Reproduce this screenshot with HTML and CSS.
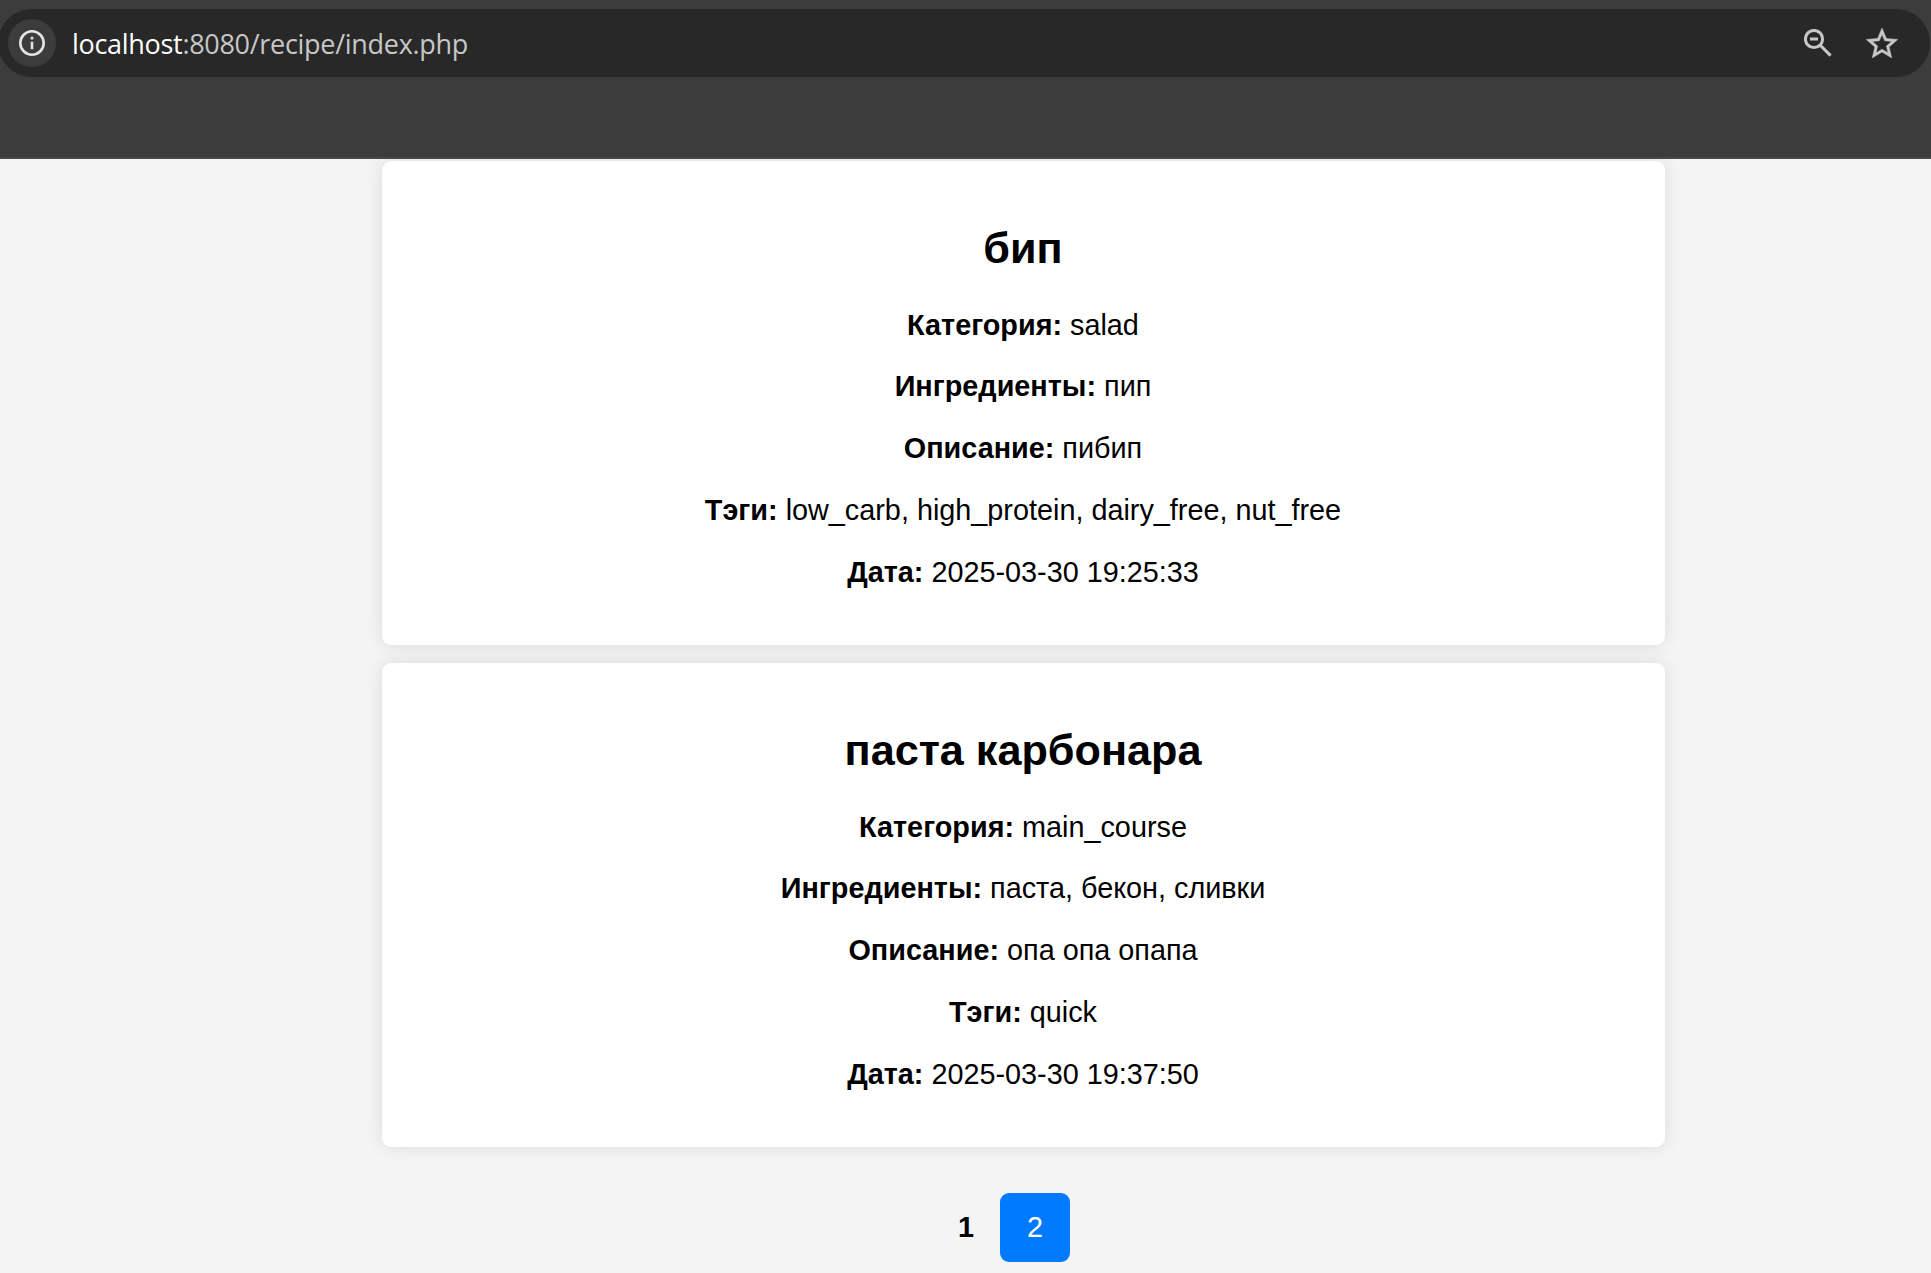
FILE: index.html
```html
<!DOCTYPE html>
<html lang="ru">
<head>
<meta charset="utf-8">
<title>Рецепты</title>
<link rel="stylesheet" href="styles.css">
</head>
<body>
<header class="toolbar">
  <div class="address-bar">
    <span class="site-info">
      <svg class="icon-info" viewBox="0 0 26 26"><circle cx="13" cy="13" r="11.7" fill="none" stroke="#e3e3e3" stroke-width="2.6"/><path d="M11.7 11.8h2.6v7.4h-2.6zM11.7 6.8h2.6v2.6h-2.6z" fill="#e3e3e3"/></svg>
    </span>
    <span class="url"><span class="host">localhost</span>:8080/recipe/index.php</span>
    <svg class="icon-zoom" viewBox="0 0 28 28"><g fill="none" stroke="#c7c7c7" stroke-width="3"><circle cx="10" cy="10" r="8.6"/><path d="M16 16l10.6 10.6M6 10h8"/></g></svg>
    <svg class="icon-star" viewBox="2 2 20 19"><path fill="#c7c7c7" stroke="#c7c7c7" stroke-width=".3" d="M22 9.24l-7.19-.62L12 2 9.19 8.63 2 9.24l5.46 4.73L5.82 21 12 17.27 18.18 21l-1.63-7.03L22 9.24zM12 15.4l-3.76 2.27 1-4.28-3.32-2.88 4.38-.38L12 6.1l1.71 4.04 4.38.38-3.32 2.88 1 4.28L12 15.4z"/></svg>
  </div>
</header>
<main class="page">
  <article class="recipe">
    <h2>бип</h2>
    <p><strong>Категория:</strong> salad</p>
    <p><strong>Ингредиенты:</strong> пип</p>
    <p><strong>Описание:</strong> пибип</p>
    <p><strong>Тэги:</strong> low_carb, high_protein, dairy_free, nut_free</p>
    <p><strong>Дата:</strong> 2025-03-30 19:25:33</p>
  </article>
  <article class="recipe">
    <h2>паста карбонара</h2>
    <p><strong>Категория:</strong> main_course</p>
    <p><strong>Ингредиенты:</strong> паста, бекон, сливки</p>
    <p><strong>Описание:</strong> опа опа опапа</p>
    <p><strong>Тэги:</strong> quick</p>
    <p><strong>Дата:</strong> 2025-03-30 19:37:50</p>
  </article>
  <nav class="pagination">
    <strong>1</strong>
    <a class="page-link" href="#">2</a>
  </nav>
</main>
</body>
</html>
```
FILE: styles.css
```css
* { box-sizing: border-box; }
html { overflow: hidden; }
body {
  margin: 0;
  height: 1273px;
  overflow: hidden;
  background: #f4f4f4;
  color: #000;
  font: 28.8px/33px "Liberation Sans", Arial, sans-serif;
}
.toolbar {
  height: 159px;
  padding-top: 9px;
  background: #3c3c3c;
  border-bottom: 2px solid #474747;
  position: relative;
  z-index: 1;
}
.address-bar {
  display: flex;
  align-items: center;
  height: 68px;
  margin: 0 1px 0 -2px;
  padding: 0 32px 0 10px;
  border-radius: 34px;
  background: #282828;
}
.site-info {
  display: flex;
  align-items: center;
  justify-content: center;
  width: 48px;
  height: 48px;
  border-radius: 50%;
  background: #3c3c3c;
}
.icon-info { width: 26px; height: 26px; }
.url {
  flex: 1;
  margin-left: 16px;
  padding-top: 1px;
  font: 27px/36px "Open Sans", "Noto Sans", sans-serif;
  letter-spacing: -0.3px;
  color: #c7c7c7;
}
.host { color: #fff; }
.icon-zoom { width: 28px; height: 28px; margin-right: 34px; }
.icon-star { width: 32px; height: 30px; }
.page {
  display: flex;
  flex-direction: column;
  align-items: center;
  gap: 18px;
  padding: 2px 0 0 116px;
}
.recipe {
  width: 1283px;
  height: 484px;
  padding: 26.8px 28px 27px 27px;
  border-radius: 9px;
  background: #fff;
  box-shadow: 0 0 18px rgba(0, 0, 0, 0.1);
  text-align: center;
}
.recipe h2 {
  margin: 35.9px 0;
  font-size: 43.2px;
  line-height: 49px;
}
.recipe p { margin: 28.8px 0; }
.pagination {
  display: flex;
  align-items: center;
  gap: 26px;
  margin: 28px 19px 0 0;
}
.page-link {
  padding: 18px 27px;
  border-radius: 9px;
  background: #007bff;
  color: #fff;
  text-decoration: none;
}
```
